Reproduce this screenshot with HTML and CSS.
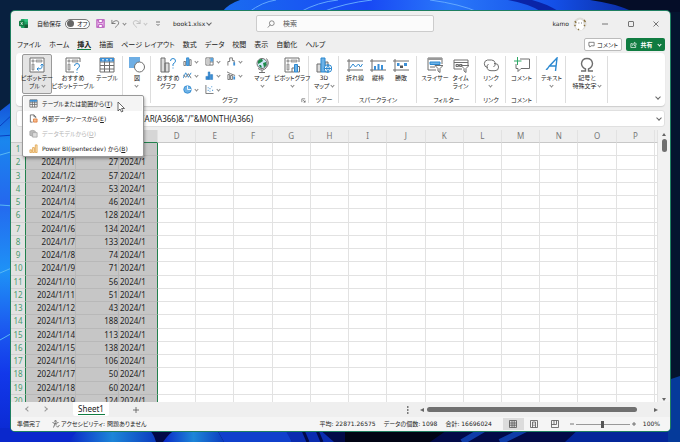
FILE: index.html
```html
<!DOCTYPE html>
<html lang="ja">
<head>
    <meta charset="UTF-8">
    <meta name="viewport" content="width=device-width, initial-scale=1.0">
    <title>book1.xlsx - Excel</title>
    <link rel="stylesheet" href="styles.css">
</head>
<body>
    <!-- Desktop wallpaper -->
    <svg class="wallpaper" viewBox="0 0 680 442" preserveAspectRatio="xMidYMid slice" aria-hidden="true">
        <defs>
            <linearGradient id="petal-left" x1="0" y1="0" x2="0" y2="1">
                <stop offset="0" stop-color="#1450d8"/>
                <stop offset="0.12" stop-color="#1a86ee"/>
                <stop offset="0.3" stop-color="#2468ee"/>
                <stop offset="0.5" stop-color="#1e92f6"/>
                <stop offset="0.66" stop-color="#1c5cf0"/>
                <stop offset="0.8" stop-color="#1238ea"/>
                <stop offset="1" stop-color="#0a28d0"/>
            </linearGradient>
            <linearGradient id="petal-top" x1="0" y1="0" x2="1" y2="0">
                <stop offset="0" stop-color="#1a6cf0"/>
                <stop offset="0.35" stop-color="#1848f4"/>
                <stop offset="0.55" stop-color="#2a78fa"/>
                <stop offset="0.8" stop-color="#1450e8"/>
                <stop offset="1" stop-color="#0a2aa0"/>
            </linearGradient>
            <linearGradient id="petal-bottom" x1="0" y1="0" x2="1" y2="0">
                <stop offset="0" stop-color="#0a28c8"/>
                <stop offset="0.5" stop-color="#1c86d8"/>
                <stop offset="1" stop-color="#0c3cc0"/>
            </linearGradient>
        </defs>
        <rect width="680" height="442" fill="#08203f"/>
        <rect x="400" width="280" height="442" fill="#04142f"/>
        <path d="M0 111 L14 100 V442 H0z" fill="url(#petal-left)"/>
        <path d="M0 126 L14 113 M0 136 L14 135" stroke="#0a3ec0" fill="none"/>
        <path d="M0 155 L14 151 M0 205 L14 206 M0 273 L14 267 M0 340 L14 332" stroke="#58b8f4" fill="none"/>
        <path d="M222 12 Q228 4 240 0 H600 Q625 4 636 12z" fill="url(#petal-top)"/>
        <path d="M249 12 Q262 2 276 0 M300 12 Q318 2 338 0 M322 12 Q345 3 372 0 M430 0 Q460 4 478 12" stroke="#62a8ff" fill="none"/>
        <path d="M508 0 Q530 4 542 12 H560 Q545 3 532 0z" fill="#0a24a8"/>
        <path d="M590 0 Q614 3 634 12 H680 V0z" fill="#050d28"/>
        <rect y="428" width="680" height="14" fill="#020a48"/>
        <rect y="428" width="80" height="14" fill="#0a28cc"/>
        <path d="M69 442 Q74 434 80 428 H148 Q154 434 156 442z" fill="url(#petal-bottom)"/>
        <path d="M163 442 Q170 432 178 428 H216 L224 442z" fill="url(#petal-bottom)"/>
        <path d="M216 428 H286 L292 442 H224z" fill="#1040cc"/>
        <path d="M284 428 H318 L334 442 H292z" fill="#0a2cb0"/>
        <path d="M302 428 L308 442 M316 428 L322 442" stroke="#020a48" stroke-width="3"/>
        <path d="M345 428 H450 L430 442 H345z" fill="#010414"/>
        <path d="M462 442 L486 428 M500 442 L528 428" stroke="#0e3ca8" stroke-width="6"/>
        <path d="M580 428 H680 V442 H565z" fill="#04269a"/>
        <path d="M668 380 L680 376 V442 H668z" fill="#053a9a"/>
    </svg>

    <div class="window">
        <header class="title-bar">
            <div class="quick-access">
                <svg class="app-icon" viewBox="0 0 10 10"><rect x="2" width="8" height="10" rx="1" fill="#21a366"/><path d="M6 0h3a1 1 0 0 1 1 1v2H6z" fill="#33c481"/><path d="M6 6h4v3a1 1 0 0 1-1 1H6z" fill="#185c37"/><rect y="2" width="6" height="6" rx="1" fill="#107c41"/><path d="M2 3.5l2 3M4 3.5l-2 3" stroke="#fff" stroke-width=".8"/></svg>
                <span class="autosave-label" id="autosave">自動保存</span>
                <button class="toggle" type="button" role="switch" aria-checked="false" aria-labelledby="autosave"><span class="knob"></span>オフ</button>
                <button class="icon-btn save" type="button" aria-label="上書き保存"><svg viewBox="0 0 10 10"><path d="M1 1h8v8H1z" fill="#f3c8f0" stroke="#b14bb8" stroke-width="1.2"/><path d="M3 1v3h4V1M3 9V6h4v3" fill="#fff" stroke="#b14bb8"/></svg></button>
                <button class="icon-btn" type="button" aria-label="元に戻す"><svg viewBox="0 0 10 10"><path d="M1 1v4h4M1 5C4 1 8 1 8.5 4 9 6 6 8 4.500 9.500" class="line"/></svg><i class="chev"></i></button>
                <button class="icon-btn faded" type="button" aria-label="やり直し"><svg viewBox="0 0 10 10"><path d="M9 1v4H5M9 5C6 1 2 1 1.500 4 1 6 4 8 5.500 9.500" class="line"/></svg><i class="chev"></i></button>
                <button class="icon-btn customize" type="button" aria-label="クイック アクセス ツール バーのユーザー設定"><svg viewBox="0 0 6 6"><path d="M1 1h4M1.500 3L3 4.500 4.500 3" class="line"/></svg></button>
                <button class="file-name" type="button">book1.xlsx <i class="chev big"></i></button>
            </div>
            <label class="search">
                <svg viewBox="0 0 10 10"><circle cx="6" cy="4" r="3" class="line"/><path d="M4 6L1 9.500" class="line"/></svg>
                <input type="text" placeholder="検索" aria-label="検索">
            </label>
            <div class="account">
                <span>kamo</span>
                <svg class="avatar" viewBox="0 0 14 14"><circle cx="7" cy="7" r="6.500" fill="#dedcd8"/><path d="M4 4Q7 1 10 4L11 10 9 13H5L3 10z" fill="#fff"/><path d="M2 4l1 2M11 3l1.500 2M1.500 8l1 1M12 8l-1 1M5 12l1 1" stroke="#8a7440" stroke-width="1.400"/><path d="M5.500 6h.8M8 6h.8" stroke="#555"/></svg>
                <button class="win-btn" type="button" aria-label="最小化"><svg viewBox="0 0 8 8"><path d="M1 4h6" class="line"/></svg></button>
                <button class="win-btn" type="button" aria-label="最大化"><svg viewBox="0 0 8 8"><rect x="1.500" y="1.500" width="5" height="5" rx=".5" class="line"/></svg></button>
                <button class="win-btn" type="button" aria-label="閉じる"><svg viewBox="0 0 8 8"><path d="M1.500 1.500l5 5M6.500 1.500l-5 5" class="line"/></svg></button>
            </div>
        </header>

        <nav class="tabs">
            <a href="#">ファイル</a>
            <a href="#">ホーム</a>
            <a href="#" class="active">挿入</a>
            <a href="#">描画</a>
            <a href="#">ページ レイアウト</a>
            <a href="#">数式</a>
            <a href="#">データ</a>
            <a href="#">校閲</a>
            <a href="#">表示</a>
            <a href="#">自動化</a>
            <a href="#">ヘルプ</a>
            <div class="tab-actions">
                <button class="comment-btn" type="button"><svg viewBox="0 0 8 8"><path d="M1 1.500h6v4H3.500L2 7V5.500H1z" class="line"/></svg>コメント</button>
                <button class="share-btn" type="button"><svg viewBox="0 0 8 8"><path d="M3 3H1v4.500h5.500V5M2.500 5.500Q3 3 5 3V1.500L7.500 3.500 5 5.500V4" /></svg>共有<i class="chev"></i></button>
            </div>
        </nav>

        <section class="ribbon">
            <div class="group group-table">
                <div class="tools">
                    <div class="menu-anchor">
                        <button class="tool pressed" type="button" aria-expanded="true">
                            <svg viewBox="0 0 16 16"><path d="M1 1h14v14H1z" fill="#fff" class="grey"/><path d="M3 3h2v2H3zM7 3h6v2H7zM3 7h2v6H3z" class="grey fill"/><path d="M13 7v3.500Q13 12 8 12M11.500 8.500L13 7l1.500 1.500M9.500 10.500L8 12l1.500 1.500" class="blue"/></svg>
                            <span>ピボットテー<br>ブル <i class="chev"></i></span>
                        </button>
                        <div class="menu" role="menu">
                            <button class="menu-item hover" type="button" role="menuitem">
                                <svg viewBox="0 0 10 10"><path d="M1 1h8v8H1zM1 3.500h8M1 6h8M3.700 1v8M6.300 1v8" fill="#fff" class="grey"/><path d="M1 1h8v2H1z" fill="#3f8fd0"/></svg>
                                <span>テーブルまたは範囲から(<u>T</u>)</span>
                                <svg class="pointer" viewBox="0 0 8 12"><path d="M1 1v9l2-2 1.500 3 1.500-.8L4.600 7.500H7.500z" fill="#fff" stroke="#444" stroke-width=".8"/></svg>
                            </button>
                            <button class="menu-item" type="button" role="menuitem">
                                <svg viewBox="0 0 10 10"><path d="M4 9H1.500V1h4l2 2v1.500M5.500 1v2h2" fill="#fff" class="grey"/><path d="M5 5.500h4V9H5z" fill="#f6b98c" stroke="#d9702a" stroke-width=".8"/></svg>
                                <span>外部データソースから(<u>E</u>)</span>
                            </button>
                            <button class="menu-item" type="button" role="menuitem" disabled>
                                <svg viewBox="0 0 10 10"><path d="M1 2.500Q4 .5 7 2.500V7Q4 9 1 7z" fill="#bbb" stroke="#aaa"/><path d="M4 4h5v5H4z" fill="#ddd" stroke="#aaa"/></svg>
                                <span>データモデルから(<u>D</u>)</span>
                            </button>
                            <button class="menu-item" type="button" role="menuitem">
                                <svg viewBox="0 0 10 10"><path d="M1 6.500h2v3H1zM4 4h2v5.500H4zM7 1h2v8.500H7z" fill="#fbe3bd" stroke="#dc9a3c" stroke-width=".8"/></svg>
                                <span>Power BI(ipentecdev) から(<u>B</u>)</span>
                            </button>
                        </div>
                    </div>
                    <button class="tool w42" type="button">
                        <svg viewBox="0 0 16 16"><path d="M9 15H1V1h14v4" class="grey"/><path d="M3 3h2v2H3zM7 3h6v2H7zM3 7h2v6H3z" class="grey fill"/><path d="M9.500 9Q9.500 6.500 12 6.500T14.500 9Q14.500 10.500 12 12v1.500M12 15v1" class="blue"/></svg>
                        <span>おすすめ<br>ピボットテーブル</span>
                    </button>
                    <button class="tool w26" type="button">
                        <svg viewBox="0 0 16 16"><path d="M1 1h14v14H1zM1 5h14M1 8.500h14M1 12h14M5.500 4v11M10.500 4v11" fill="#fff" class="grey"/><path d="M1 1h14v3.500H1z" fill="#3b8fd6"/><path d="M3 2.800h2M7 2.800h2M11 2.800h2" stroke="#fff"/></svg>
                        <span>テーブル</span>
                    </button>
                </div>
            </div>

            <div class="group">
                <div class="tools">
                    <button class="tool" type="button">
                        <svg viewBox="0 0 16 16"><path d="M0 0h11v11H0z" fill="#6eaee4"/><circle cx="10.500" cy="10" r="5" fill="#fff" class="grey"/></svg>
                        <span>図<br><i class="chev"></i></span>
                    </button>
                </div>
            </div>

            <div class="group group-charts">
                <div class="tools">
                    <button class="tool w26" type="button">
                        <svg viewBox="0 0 16 16"><path d="M1 1h4v14H1zM5 6h4v9H5z" fill="#ddd" class="grey"/><path d="M10.500 4Q10.500 1.500 13 1.500T15.500 4Q15.500 5.500 13 7v2M13 10.500v1" class="blue"/></svg>
                        <span>おすすめ<br>グラフ</span>
                    </button>
                    <div class="chart-grid">
                        <button type="button" aria-label="縦棒グラフ"><svg viewBox="0 0 10 10"><path d="M1 5h2v4.500H1zM7 3h2v6.500H7z" class="grey"/><path d="M4 1h2.500v8.500H4z" fill="#5aa5e0" class="blue"/></svg><i class="chev"></i></button>
                        <button type="button" aria-label="階層構造グラフ"><svg viewBox="0 0 10 10"><path d="M1 1h8v8H1zM5.500 1v8M5.500 5.500H9" class="grey"/><path d="M2 2h3v6H2z" fill="#ccc"/><path d="M6 1h3v4H6z" fill="#5aa5e0"/></svg><i class="chev"></i></button>
                        <button type="button" aria-label="ウォーターフォール図"><svg viewBox="0 0 10 10"><path d="M1 9.500V5h2M3 5V1h3v3h2v3" class="grey"/><path d="M7 6h2v3.500H7z" fill="#3b8fd6"/></svg><i class="chev"></i></button>
                        <button type="button" aria-label="折れ線グラフ"><svg viewBox="0 0 10 10"><path d="M0 8l3-6 3 5 3-5" class="blue"/><path d="M0 4l3 3 3-4 3 5" class="grey"/></svg><i class="chev"></i></button>
                        <button type="button" aria-label="統計グラフ"><svg viewBox="0 0 10 10"><path d="M1 6h2.500v3.500H1zM3.500 1h2v8.500h-2zM6 4h2.500v5.500H6z" fill="#3b8fd6" stroke="#1f6fb8" stroke-width=".5"/></svg><i class="chev"></i></button>
                        <button type="button" aria-label="組み合わせグラフ"><svg viewBox="0 0 10 10"><path d="M1 4h2v5.500H1zM4 5h2v4.500H4z" class="grey"/><path d="M7 6h2v3.500H7z" fill="#3b8fd6"/><path d="M0 1l4 2 5 2" class="grey"/></svg><i class="chev"></i></button>
                        <button type="button" aria-label="円グラフ"><svg viewBox="0 0 10 10"><circle cx="5" cy="5" r="4.200" fill="#6eb2e6" stroke="#1f7fcc" stroke-width=".8"/><path d="M5 .8V5h4.200" stroke="#fff" fill="none"/></svg><i class="chev"></i></button>
                        <button type="button" aria-label="散布図"><svg viewBox="0 0 10 10"><path d="M1 0v9.500h8.500" class="grey"/><path d="M3 6h1M5 4h1M7 2h1M5 7h1M8 6h1M3 3h1" stroke="#3b8fd6" stroke-width="1.200"/></svg><i class="chev"></i></button>
                    </div>
                    <button class="tool w26" type="button">
                        <svg viewBox="0 0 16 16"><circle cx="8" cy="6.500" r="5" fill="#cfe8f7" class="grey"/><path d="M4 4q2-2.500 4-2l1 2-3 2-2 1zM9 6l3-1 .5 3-2.500 2.500zM5 8l2 0 1 2.500-2 0z" fill="#1e8a4a"/><path d="M12.500 1.500Q16 6 12.500 10.500T4 11.500M8 13v2M5 15.500h6" class="grey"/></svg>
                        <span>マップ<br><i class="chev"></i></span>
                    </button>
                    <button class="tool w34" type="button">
                        <svg viewBox="0 0 16 16"><path d="M8 15H1V1h14v4" class="grey"/><path d="M3 3h2v2H3zM7 3h6v2H7zM3 7h2v6H3z" class="grey fill"/><path d="M8 11h2.500v4H8zM13.500 9.500h2V15h-2z" fill="#fff" class="grey"/><path d="M10.500 7.500h3V15h-3z" fill="#6eb2e6" class="blue"/></svg>
                        <span>ピボットグラフ<br><i class="chev"></i></span>
                    </button>
                </div>
                <div class="group-label">グラフ<button class="launcher" type="button" aria-label="すべてのグラフを表示"><svg viewBox="0 0 6 6"><path d="M1 5V1h4M2.500 2.500L5 5M5 3v2H3" class="line"/></svg></button></div>
            </div>

            <div class="group">
                <div class="tools">
                    <button class="tool" type="button">
                        <svg viewBox="0 0 16 16"><path d="M1 7h4v8H1zM9 5h3v10H9z" fill="#ddd" class="grey"/><path d="M5 1h4v14H5z" fill="#6eb2e6" class="blue"/><circle cx="12" cy="11.500" r="3.800" fill="#fff" class="blue"/><path d="M8.200 11.500h7.600M12 7.700q-3 3.800 0 7.600q3-3.800 0-7.600" class="blue"/></svg>
                        <span>3D<br>マップ <i class="chev"></i></span>
                    </button>
                </div>
                <div class="group-label">ツアー</div>
            </div>

            <div class="group">
                <div class="tools">
                    <button class="tool" type="button"><svg viewBox="0 0 16 16"><path d="M2 2v13M0 4h16M0 13h16" class="grey"/><path d="M3 11l3-4 2.500 3 3-3 2 3 2-3" class="blue"/></svg><span>折れ線</span></button>
                    <button class="tool" type="button"><svg viewBox="0 0 16 16"><path d="M2 2v13M0 4h16M0 13h16" class="grey"/><path d="M4 9h2v4H4zM7.500 7h2v6h-2zM11 8h2v5h-2z" fill="#3b8fd6"/></svg><span>縦棒</span></button>
                    <button class="tool" type="button"><svg viewBox="0 0 16 16"><path d="M2 2v13M0 4h16M0 13h16" class="grey"/><path d="M4 6h2.500v3H4zM11 6h3v3h-3z" fill="#3b8fd6"/><path d="M7 8.500h3v2.500H7z" fill="#555"/></svg><span>勝敗</span></button>
                </div>
                <div class="group-label">スパークライン</div>
            </div>

            <div class="group">
                <div class="tools">
                    <button class="tool w28" type="button"><svg viewBox="0 0 16 16"><path d="M9 13H1V1h14v6" class="grey"/><path d="M1 1h14v2H1z" fill="#999"/><path d="M3 5h10v2.500H3z" fill="#6eb2e6" class="blue"/><path d="M3 10h5" class="grey"/><path d="M8 8.500h8l-3 3V15.500l-2-1.500v-2.500z" fill="#fff" class="grey"/></svg><span>スライサー</span></button>
                    <button class="tool" type="button"><svg viewBox="0 0 16 16"><path d="M9 12H1V3h14v5M1 5.500h14" class="grey"/><path d="M3 7.500h2.500v2H3zM6.500 7.500H9v2H6.500z" fill="#ccc" class="grey"/><path d="M8 8.500h8l-3 3V15.500l-2-1.500v-2.500z" fill="#fff" class="grey"/></svg><span>タイム<br>ライン</span></button>
                </div>
                <div class="group-label">フィルター</div>
            </div>

            <div class="group">
                <div class="tools">
                    <button class="tool" type="button"><svg viewBox="0 0 16 16"><path d="M5 10.500H4.500a3.800 3.800 0 0 1 0-7.500h4a3.800 3.800 0 0 1 2 7M11 6.500h1a3.600 3.600 0 0 1 0 7.200H8A3.700 3.700 0 0 1 5.500 7" class="grey"/></svg><span>リンク<br><i class="chev"></i></span></button>
                </div>
                <div class="group-label">リンク</div>
            </div>

            <div class="group">
                <div class="tools">
                    <button class="tool" type="button"><svg viewBox="0 0 16 16"><path d="M6 2h9.500v9.500H7L4 14.500v-3H2V7" class="grey"/><path d="M3.500 0v8M0 4h7.500" stroke="#2fa866" fill="none"/></svg><span>コメント</span></button>
                </div>
                <div class="group-label">コメント</div>
            </div>

            <div class="group">
                <div class="tools">
                    <button class="tool" type="button"><svg viewBox="0 0 16 16"><path d="M2 12Q3 13 5 9.500L13 1l-1.500 13M5.500 9h6.500" class="blue thick"/></svg><span>テキスト<br><i class="chev"></i></span></button>
                </div>
            </div>

            <div class="group">
                <div class="tools">
                    <button class="tool" type="button"><svg viewBox="0 0 16 16"><path d="M2 14h4.500v-2Q2.500 10 2.500 6.500 3 1.500 8 1.500T13.500 6.500Q13.500 10 9.500 12v2H14" class="grey thick"/></svg><span>記号と<br>特殊文字 <i class="chev"></i></span></button>
                </div>
            </div>

            <button class="collapse" type="button" aria-label="リボンを折りたたむ"><i class="chev big"></i></button>
        </section>

        <div class="formula-bar">
            <input type="text" aria-label="数式バー" value='=YEAR(A366)&amp;"/"&amp;MONTH(A366)'>
            <button type="button" aria-label="数式バーの展開"><i class="chev big"></i></button>
        </div>

        <main class="workspace">
            <div class="grid-wrap">
                <table class="grid">
                    <colgroup>
                        <col class="col-num"><col class="col-a"><col class="col-b"><col class="col-c">
                        <col><col><col><col><col><col><col><col><col><col><col><col><col>
                        <col class="col-edge">
                    </colgroup>
                    <thead>
                        <tr id="head"></tr>
                    </thead>
                    <tbody id="rows"></tbody>
                </table>
            </div>
            <div class="v-scroll">
                <span class="arrow up"></span>
                <span class="thumb"></span>
                <span class="arrow down"></span>
            </div>
        </main>

        <div class="sheet-bar">
            <button class="sheet-nav" type="button" aria-label="前のシート"><i class="chev big left"></i></button>
            <button class="sheet-nav" type="button" aria-label="次のシート"><i class="chev big right"></i></button>
            <a href="#" class="sheet-tab">Sheet1</a>
            <button class="add-sheet" type="button" aria-label="新しいシート"><svg viewBox="0 0 8 8"><path d="M4 1v6M1 4h6" class="line"/></svg></button>
            <div class="h-scroll">
                <svg class="dots" viewBox="0 0 2 8"><path d="M0 1h1.500M0 4h1.500M0 7h1.500" stroke="#555" stroke-width="1.300"/></svg>
                <span class="arrow prev"></span>
                <span class="thumb"></span>
                <span class="arrow next"></span>
            </div>
        </div>

        <footer class="status-bar">
            <span>準備完了</span>
            <span class="a11y"><svg viewBox="0 0 8 8"><circle cx="3.500" cy="1.200" r=".8" class="line"/><path d="M.5 2.500L3 3.500 6.500 2.500M3 3.500L1.500 7.500M4 3.500v2M4.500 6l1.200 1.200L7.500 5" class="line"/></svg>アクセシビリティ: 問題ありません</span>
            <div class="stats">
                <span>平均: 22871.26575</span>
                <span>データの個数: 1098</span>
                <span>合計: 16696024</span>
            </div>
            <div class="views">
                <button class="active" type="button" aria-label="標準"><svg viewBox="0 0 8 8"><path d="M.5 .5h7v7h-7zM.5 3h7M.5 5.200h7M3 .5v7M5.200 .5v7" class="line"/></svg></button>
                <button type="button" aria-label="ページ レイアウト"><svg viewBox="0 0 8 8"><path d="M.5 .5h7v7h-7zM2.500 2h3v5.500M2.500 2v5.500M3.500 4h1M3.500 5.500h1" class="line"/></svg></button>
                <button type="button" aria-label="改ページ プレビュー"><svg viewBox="0 0 8 8"><path d="M.5 .5h7v7h-7zM3 .5v4M5.500 .5v4M.5 4.500h5" class="line"/></svg></button>
            </div>
            <div class="zoom">
                <button type="button" aria-label="縮小"><svg viewBox="0 0 6 6"><path d="M1 3h4" class="line"/></svg></button>
                <input type="range" min="0" max="100" value="50" aria-label="ズーム">
                <button type="button" aria-label="拡大"><svg viewBox="0 0 6 6"><path d="M1 3h4M3 1v4" class="line"/></svg></button>
                <span>100%</span>
            </div>
        </footer>
    </div>

    <script>
        const letters = 'DEFGHIJKLMNOP'.split('');
        const counts = [27, 57, 53, 46, 128, 134, 133, 74, 71, 56, 51, 43, 188, 113, 138, 106, 50, 60, 124];

        // Column headings, the open menu lies over the three selected ones
        let head = '<th></th>' + '<th class="picked"></th>'.repeat(3);
        letters.forEach(letter => {
            head += `<th>${letter}</th>`;
        });
        document.getElementById('head').innerHTML = head + '<th></th>';

        // Row 1 is the heading row, the data starts on row 2
        const blanks = '<td></td>'.repeat(14);
        let rows = '';
        for (let n = 1; n <= 20; n++) {
            const date = n > 1 ? `2024/1/${n - 1}` : '';
            const count = n > 1 ? counts[n - 2] : '';
            const month = n > 1 ? '2024/1' : '';
            rows += `<tr><th>${n}</th><td class="sel num">${date}</td><td class="sel num">${count}</td><td class="sel last">${month}</td>${blanks}</tr>`;
        }
        document.getElementById('rows').innerHTML = rows;
    </script>
</body>
</html>
```
FILE: styles.css
```css
* {
    box-sizing: border-box;
}

body {
    margin: 0;
    padding: 11px 10px 11px 11px;
    height: 100vh;
    overflow: hidden;
    position: relative;
    font-family: "DejaVu Sans", "Noto Sans CJK JP", sans-serif;
    font-size: 6px;
    line-height: 8px;
    font-feature-settings: "palt";
    color: #222;
    background-color: #08203f;
}

button, input {
    font: inherit;
    font-feature-settings: inherit;
    color: inherit;
    margin: 0;
    padding: 0;
    border: none;
    background: none;
}

a {
    color: inherit;
    text-decoration: none;
}

svg {
    display: block;
    flex: none;
}

.wallpaper {
    position: absolute;
    top: 0;
    left: 0;
    width: 100%;
    height: 100%;
}

.window {
    position: relative;
    height: 100%;
    display: flex;
    flex-direction: column;
    background-color: #efefef;
    border-radius: 4px;
    box-shadow: 0 0 0 1px #1f7f60;
}

/* Shared icon strokes */
.line {
    fill: none;
    stroke: #555;
    stroke-width: 0.8;
}

.grey {
    stroke: #6e6e6e;
    stroke-width: 1;
}

.grey:not([fill]), .blue:not([fill]) {
    fill: none;
}

.grey.fill {
    fill: #d0d0d0;
    stroke-width: 0.6;
}

.blue {
    stroke: #2b88d0;
    stroke-width: 1;
}

.thick {
    stroke-width: 1.4;
}

.chev {
    display: inline-block;
    width: 3px;
    height: 3px;
    border-right: 1px solid #888;
    border-bottom: 1px solid #888;
    transform: rotate(45deg);
    vertical-align: 1px;
}

.chev.big {
    width: 4px;
    height: 4px;
    border-color: #666;
}

.chev.left {
    transform: rotate(135deg);
    border-color: #999;
}

.chev.right {
    transform: rotate(-45deg);
    border-color: #999;
}

/* Title bar */
.title-bar {
    height: 25px;
    flex: none;
    display: grid;
    grid-template-columns: 237px 178px 1fr;
    align-items: center;
    padding: 0 5px 0 8px;
}

.quick-access {
    display: flex;
    align-items: center;
}

.app-icon {
    width: 9px;
    height: 9px;
    margin-right: 9px;
}

.autosave-label {
    margin-right: 4px;
}

.toggle {
    width: 25px;
    height: 10px;
    display: flex;
    align-items: center;
    gap: 3px;
    padding: 0 2px 0 1px;
    line-height: 8px;
    border: 1px solid #777;
    border-radius: 5px;
    background-color: #fff;
    white-space: nowrap;
}

.knob {
    width: 7px;
    height: 7px;
    flex: none;
    border-radius: 50%;
    background-color: #666;
}

.icon-btn {
    display: flex;
    align-items: center;
    gap: 3px;
    margin-left: 6px;
}

.icon-btn svg {
    width: 9px;
    height: 9px;
}

.faded {
    opacity: 0.4;
}

.customize {
    margin-left: 8px;
}

.customize svg {
    width: 6px;
    height: 6px;
}

.file-name {
    margin-left: 12px;
}

.search {
    height: 17px;
    display: flex;
    align-items: center;
    gap: 8px;
    padding: 0 10px;
    border: 1px solid #ccc;
    border-radius: 2px;
    background-color: #fbfbfb;
}

.search svg {
    width: 8px;
    height: 8px;
}

.search input {
    flex: 1;
    min-width: 0;
    font-size: 7px;
    outline: none;
}

.search input::placeholder {
    color: #555;
    opacity: 1;
}

.account {
    display: flex;
    align-items: center;
    justify-content: flex-end;
}

.avatar {
    width: 14px;
    height: 14px;
    margin: 0 5px 0 4px;
}

.win-btn {
    width: 26px;
    display: flex;
    justify-content: center;
}

.win-btn svg {
    width: 8px;
    height: 8px;
}

.win-btn:last-child {
    width: 18px;
    margin-left: 3px;
}

/* Ribbon tabs */
.tabs {
    height: 17px;
    flex: none;
    display: flex;
    align-items: center;
    gap: 8px;
    padding: 0 5px 0 6px;
    font-size: 7px;
    white-space: nowrap;
}

.tabs .active {
    font-weight: bold;
    box-shadow: 0 2px 0 -1px #107c41, 0 1px 0 #107c41;
}

.tab-actions {
    display: flex;
    gap: 4px;
    margin-left: auto;
    font-size: 6px;
}

.comment-btn, .share-btn {
    height: 13px;
    display: flex;
    align-items: center;
    justify-content: center;
    gap: 2px;
    border-radius: 2px;
}

.comment-btn {
    width: 38px;
    border: 1px solid #bbb;
    background-color: #fff;
}

.share-btn {
    width: 39px;
    gap: 3px;
    color: #fff;
    font-weight: bold;
    background-color: #107c41;
}

.comment-btn svg, .share-btn svg {
    width: 7px;
    height: 7px;
}

.share-btn path {
    fill: none;
    stroke: #fff;
    stroke-width: 0.8;
}

.share-btn .chev {
    border-color: #fff;
    margin-left: 2px;
}

/* Ribbon */
.ribbon {
    height: 53px;
    flex: none;
    display: grid;
    grid-template-columns: 107px 28px 158px 30px 78px 59px 30px 31px 29px 42px 1fr;
    margin: 0 5px;
    padding: 1px 0;
    border-radius: 4px;
    background-color: #fff;
    box-shadow: 0 1px 1px #ccc;
}

.group {
    display: flex;
    flex-direction: column;
    justify-content: space-between;
    padding-bottom: 1px;
    background: linear-gradient(#ddd, #ddd) right center / 1px 47px no-repeat;
}

.tools {
    display: flex;
    justify-content: center;
}

.group-table .tools {
    justify-content: flex-start;
    padding-left: 6px;
}

.group-charts .tools {
    justify-content: flex-start;
    padding-left: 4px;
}

.tool {
    min-width: 23px;
    height: 40px;
    display: flex;
    flex-direction: column;
    align-items: center;
    gap: 1px;
    padding-top: 3px;
    white-space: nowrap;
    border-radius: 2px;
}

.tool svg {
    width: 16px;
    height: 16px;
}

.w26 {
    width: 26px;
}

.w28 {
    width: 28px;
}

.w34 {
    width: 34px;
}

.w42 {
    width: 42px;
}

.tool.pressed {
    width: 30px;
    border: 1px solid #999;
    padding-top: 2px;
    background-color: #e4e4e4;
}

.chart-grid {
    display: grid;
    grid-template-columns: repeat(3, 22px);
    grid-auto-rows: 14px;
    padding-left: 2px;
    align-content: start;
}

.chart-grid button {
    display: flex;
    align-items: center;
    gap: 3px;
}

.chart-grid svg {
    width: 9px;
    height: 9px;
}

.group-label {
    display: flex;
    justify-content: center;
    position: relative;
    white-space: nowrap;
}

.launcher {
    position: absolute;
    right: 3px;
    top: 2px;
}

.launcher svg {
    width: 5px;
    height: 5px;
}

.collapse {
    align-self: end;
    justify-self: end;
    padding: 0 5px 3px;
}

/* Pivot table drop-down */
.menu-anchor {
    position: relative;
}

.menu {
    position: absolute;
    top: 41px;
    left: 0;
    z-index: 2;
    width: 122px;
    padding: 0 1px;
    border: 1px solid #999;
    border-radius: 2px;
    background-color: #fff;
    box-shadow: 1px 2px 3px rgba(0, 0, 0, 0.3);
}

.menu-item {
    position: relative;
    width: 100%;
    height: 15px;
    display: flex;
    align-items: center;
    gap: 4px;
    padding-left: 5px;
    white-space: nowrap;
}

.menu-item svg {
    width: 9px;
    height: 9px;
}

.menu-item.hover {
    background-color: #f4f4f4;
}

.menu-item:disabled {
    color: #b4b4b4;
}

.menu-item .pointer {
    position: absolute;
    left: 93px;
    top: 5px;
    width: 8px;
    height: 12px;
    z-index: 1;
}

/* Formula bar */
.formula-bar {
    height: 17px;
    flex: none;
    display: flex;
    align-items: center;
    margin: 4px 5px 3px;
    padding: 0 3px 0 114px;
    border: 1px solid #e0e0e0;
    border-radius: 3px;
    background-color: #fff;
}

.formula-bar input {
    flex: 1;
    min-width: 0;
    font-family: "Noto Sans", sans-serif;
    font-size: 8px;
    line-height: 12px;
}

/* Sheet */
.workspace {
    flex: 1;
    min-height: 0;
    display: flex;
}

.grid-wrap {
    flex: 1;
    min-width: 0;
    overflow: hidden;
}

.grid {
    width: 100%;
    height: 278px;
    table-layout: fixed;
    border-spacing: 0;
    font-family: "Noto Sans", sans-serif;
    font-size: 8px;
    line-height: 12px;
    background-color: #fff;
}

.col-num {
    width: 15px;
}

.col-a {
    width: 50px;
}

.col-b {
    width: 43px;
}

.col-c {
    width: 39px;
}

.col-edge {
    width: 3px;
}

.grid th, .grid td {
    padding: 0 0 0 1px;
    border-right: 1px solid #e2e2e2;
    border-bottom: 1px solid #e2e2e2;
    overflow: hidden;
    white-space: nowrap;
}

.grid th {
    padding: 0;
    font-weight: normal;
    color: #777;
    background-color: #efefef;
}

.grid thead th {
    height: 13px;
    border-bottom-color: #c8c8c8;
}

.grid thead .picked {
    background-color: #d6d6d6;
    border-bottom-color: #21804c;
}

.grid tbody th {
    color: #4a9a70;
    background-color: #e2e2e2;
    border-right: 1px solid #21804c;
    border-bottom-color: #d0d0d0;
}

.grid .sel {
    background-color: #c6c6c6;
    border-color: #b8b8b8;
}

.grid .num {
    text-align: right;
}

.grid .last {
    border-right-color: #21804c;
}

.v-scroll {
    width: 12px;
    display: flex;
    flex-direction: column;
    align-items: center;
    gap: 3px;
    padding: 3px 0 1px;
    background-color: #f2f2f2;
}

.thumb {
    border-radius: 3px;
    background-color: #707070;
}

.v-scroll .thumb {
    width: 5px;
    height: 13px;
}

.arrow {
    border: 2px solid transparent;
}

.arrow.up {
    border-top: none;
    border-bottom: 3px solid #666;
}

.arrow.down {
    margin-top: auto;
    border-bottom: none;
    border-top: 3px solid #666;
}

.arrow.prev {
    border-left: none;
    border-right: 4px solid #666;
}

.arrow.next {
    border-right: none;
    border-left: 4px solid #666;
}

/* Sheet tabs */
.sheet-bar {
    height: 15px;
    flex: none;
    display: flex;
    align-items: center;
    padding: 0 12px 0 8px;
}

.sheet-nav {
    width: 17px;
}

.sheet-tab {
    align-self: flex-start;
    width: 36px;
    height: 14px;
    margin-left: 20px;
    padding-top: 1px;
    text-align: center;
    font-family: "Noto Sans", sans-serif;
    font-size: 8px;
    line-height: 12px;
    background: linear-gradient(#107c41, #107c41) center bottom 1px / 27px 1px no-repeat #fff;
    border-radius: 0 0 2px 2px;
}

.add-sheet {
    margin-left: 23px;
}

.add-sheet svg {
    width: 8px;
    height: 8px;
}

.h-scroll {
    width: 251px;
    margin-left: auto;
    display: flex;
    align-items: center;
    gap: 3px;
}

.h-scroll .thumb {
    flex: 1;
    height: 5px;
    margin-right: 14px;
}

.dots {
    width: 2px;
    height: 8px;
    margin-right: 8px;
}

/* Status bar */
.status-bar {
    height: 14px;
    flex: none;
    display: flex;
    align-items: center;
    padding: 0 10px 0 6px;
    border-radius: 0 0 4px 4px;
    background-color: #f5f5f5;
    white-space: nowrap;
}

.a11y {
    display: flex;
    align-items: center;
    gap: 1px;
    margin-left: 11px;
}

.a11y svg {
    width: 8px;
    height: 8px;
}

.stats {
    display: flex;
    gap: 8px;
    margin-left: auto;
}

.views {
    display: flex;
    margin-left: 11px;
}

.views button {
    width: 21px;
    height: 12px;
    display: flex;
    align-items: center;
    justify-content: center;
}

.views svg {
    width: 8px;
    height: 8px;
}

.views .active {
    background-color: #dcdcdc;
}

.zoom {
    display: flex;
    align-items: center;
    margin-left: 3px;
}

.zoom svg {
    width: 6px;
    height: 6px;
}

.zoom input {
    appearance: none;
    width: 54px;
    height: 8px;
    margin: 0 1px;
    background: linear-gradient(#999, #999) center / 100% 1px no-repeat;
}

.zoom input::-webkit-slider-thumb {
    appearance: none;
    width: 3px;
    height: 7px;
    background-color: #555;
}

.zoom span {
    margin-left: 6px;
}
```
